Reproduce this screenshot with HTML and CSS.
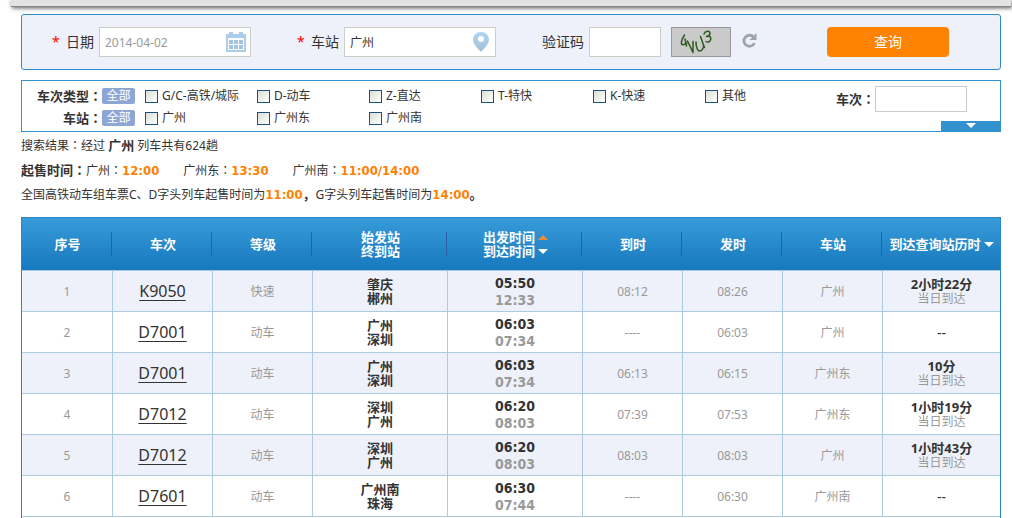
FILE: index.html
```html
<!DOCTYPE html>
<html lang="zh-CN">
<head>
<meta charset="utf-8">
<title>车站车次查询</title>
<link rel="stylesheet" href="styles.css">
</head>
<body>
<div class="topbar"></div>
<main class="page">
  <form class="search">
    <div class="field">
      <span class="required">*</span>
      <label for="date">日期</label>
      <div class="control">
        <input class="text muted" id="date" type="text" value="2014-04-02">
        <svg class="control-icon" width="20" height="20" viewBox="0 0 20 20">
          <path fill="#abcde9" d="M0 2h3V0h4v2h6V0h4v2h3v18H0z"/>
          <path fill="#fff" d="M2 6h16v12H2z"/>
          <path fill="#a5c3df" d="M3 8h4v4H3zM8 8h4v4H8zM13 8h4v4h-4zM3 13h4v4H3zM8 13h4v4H8zM13 13h4v4h-4z"/>
        </svg>
      </div>
    </div>
    <div class="field">
      <span class="required">*</span>
      <label for="station">车站</label>
      <div class="control">
        <input class="text" id="station" type="text" value="广州">
        <svg class="control-icon pin" width="16" height="20" viewBox="0 0 16 20">
          <defs><linearGradient id="pin-fill" x2="0" y2="1"><stop stop-color="#b0d4f0"/><stop offset="1" stop-color="#a3c0dc"/></linearGradient></defs>
          <path fill="url(#pin-fill)" fill-rule="evenodd" d="M8 0C3.400 0 0 3.400 0 7.800 0 12 5 17 8 20c3-3 8-8 8-12.200C16 3.400 12.600 0 8 0zm0 4a3 3 0 1 1 0 6 3 3 0 0 1 0-6z"/>
        </svg>
      </div>
    </div>
    <div class="field">
      <label for="code">验证码</label>
      <input class="text code" id="code" type="text">
      <svg class="captcha" width="60" height="30" viewBox="0 0 60 30" role="img" aria-label="验证码图片">
        <rect x=".5" y=".5" width="59" height="29" fill="#cacaca" stroke="#999"/>
        <g fill="none" stroke="#2d5a1d" stroke-width="1.500" stroke-linecap="round" stroke-linejoin="round">
          <path d="M13.500 8c-2 3-3.500 6-3 9 1 2 3 0 5.500-1M14 12l1.500 7"/>
          <path d="M16.500 14l5.500 11.500v-11"/>
          <path d="M25 15c0 3 1 9 3.500 9s4.500-3 4-6l-3-8.500M32.500 18l1 2.500"/>
          <path d="M33 7c1-3 6-4 6-.5 0 2-1.500 2.500-3.500 3 4-1 5 1 4 3.500s-3 2.500-4.500 1.500"/>
        </g>
      </svg>
      <button class="refresh" type="button" aria-label="刷新验证码">
        <svg width="15" height="15" viewBox="0 0 15 15">
          <path fill="none" stroke="#9fa5af" stroke-width="2.800" d="M11.500 4A5.500 5.500 0 1 0 12.500 10"/>
          <path fill="#9fa5af" d="M14.500 0v7H7.500z"/>
        </svg>
      </button>
    </div>
    <button class="submit" type="submit">查询</button>
  </form>

  <section class="filters">
    <div class="filter-rows">
      <div class="filter-row">
        <b class="filter-name">车次类型<i class="colon">：</i></b>
        <button class="all" type="button">全部</button>
        <label class="option"><input type="checkbox">G/C-高铁/城际</label>
        <label class="option"><input type="checkbox">D-动车</label>
        <label class="option"><input type="checkbox">Z-直达</label>
        <label class="option"><input type="checkbox">T-特快</label>
        <label class="option"><input type="checkbox">K-快速</label>
        <label class="option"><input type="checkbox">其他</label>
      </div>
      <div class="filter-row">
        <b class="filter-name">车站<i class="colon">：</i></b>
        <button class="all" type="button">全部</button>
        <label class="option"><input type="checkbox">广州</label>
        <label class="option"><input type="checkbox">广州东</label>
        <label class="option"><input type="checkbox">广州南</label>
      </div>
    </div>
    <div class="train">
      <label for="train">车次<i class="colon">：</i></label>
      <input id="train" type="text">
    </div>
    <button class="toggle" type="button" aria-label="展开"><span class="arrow down"></span></button>
  </section>

  <section class="summary">
    <p>搜索结果<i class="colon">：</i>经过 <b>广州</b> 列车共有624趟</p>
    <p class="sale"><span><b>起售时间<i class="colon">：</i></b>广州<i class="colon">：</i><strong>12:00</strong></span><span>广州东<i class="colon">：</i><strong>13:30</strong></span><span>广州南<i class="colon">：</i><strong>11:00/14:00</strong></span></p>
    <p>全国高铁动车组车票C、D字头列车起售时间为<strong>11:00</strong><b>，</b>G字头列车起售时间为<strong>14:00</strong><b>。</b></p>
  </section>

  <div class="results">
    <table>
      <colgroup><col class="c-index"><col class="c-std"><col class="c-std"><col class="c-wide"><col class="c-wide"><col class="c-std"><col class="c-std"><col class="c-std"><col class="c-last"></colgroup>
      <thead>
        <tr>
          <th>序号</th><th>车次</th><th>等级</th><th>始发站<br>终到站</th>
          <th><button class="sort" type="button">出发时间<span class="arrow up"></span></button><button class="sort" type="button">到达时间<span class="arrow down"></span></button></th>
          <th>到时</th><th>发时</th><th>车站</th>
          <th><button class="sort" type="button">到达查询站历时<span class="arrow down"></span></button></th>
        </tr>
      </thead>
      <tbody>
        <tr><td>1</td><td><a href="#">K9050</a></td><td>快速</td><td class="route">肇庆<br>郴州</td><td class="times">05:50<br><span>12:33</span></td><td>08:12</td><td>08:26</td><td>广州</td><td class="span"><b>2小时22分</b><br>当日到达</td></tr>
        <tr><td>2</td><td><a href="#">D7001</a></td><td>动车</td><td class="route">广州<br>深圳</td><td class="times">06:03<br><span>07:34</span></td><td>----</td><td>06:03</td><td>广州</td><td class="none">--</td></tr>
        <tr><td>3</td><td><a href="#">D7001</a></td><td>动车</td><td class="route">广州<br>深圳</td><td class="times">06:03<br><span>07:34</span></td><td>06:13</td><td>06:15</td><td>广州东</td><td class="span"><b>10分</b><br>当日到达</td></tr>
        <tr><td>4</td><td><a href="#">D7012</a></td><td>动车</td><td class="route">深圳<br>广州</td><td class="times">06:20<br><span>08:03</span></td><td>07:39</td><td>07:53</td><td>广州东</td><td class="span"><b>1小时19分</b><br>当日到达</td></tr>
        <tr><td>5</td><td><a href="#">D7012</a></td><td>动车</td><td class="route">深圳<br>广州</td><td class="times">06:20<br><span>08:03</span></td><td>08:03</td><td>08:03</td><td>广州</td><td class="span"><b>1小时43分</b><br>当日到达</td></tr>
        <tr><td>6</td><td><a href="#">D7601</a></td><td>动车</td><td class="route">广州南<br>珠海</td><td class="times">06:30<br><span>07:44</span></td><td>----</td><td>06:30</td><td>广州南</td><td class="none">--</td></tr>
      </tbody>
    </table>
  </div>
</main>
</body>
</html>
```
FILE: styles.css
```css
* { box-sizing: border-box; }

body {
  margin: 0;
  min-height: 100vh;
  display: flex;
  flex-direction: column;
  background: #fff;
  color: #333;
  font: 12px/14px "Noto Sans", "Noto Sans CJK SC", sans-serif;
}

input, button { font: inherit; color: inherit; }
button { border: 0; padding: 0; background: none; cursor: pointer; }

.topbar {
  height: 7px;
  margin: 0 1px 0 11px;
  background: #e3e3e3;
  border-bottom: 1px solid #858585;
  box-shadow: 1px 1px 4px #555;
}

.page {
  flex: 1;
  display: flex;
  flex-direction: column;
  padding: 7px 11px 0 21px;
}

/* Centred full-width colon */
.colon {
  font-family: "Noto Sans CJK TC", sans-serif;
  font-style: normal;
  -webkit-locale: "zh-TW";
}

/* Search form */
.search {
  display: flex;
  align-items: center;
  gap: 46px;
  height: 56px;
  padding-left: 30px;
  background: #eef1f9;
  border: 1px solid #2f8bcb;
  border-radius: 3px;
}
.field { display: flex; align-items: center; font-size: 14px; }
.field label { margin-right: 5px; white-space: nowrap; }
.required { width: 14px; color: #f00; }
.control { display: flex; position: relative; }
.text {
  width: 152px;
  height: 30px;
  padding: 0 5px;
  background: #fff;
  border: 1px solid #cfcdc7;
  font-size: 12px;
}
.text.muted { color: #999; }
.text.code { width: 72px; }
.control-icon { position: absolute; right: 5px; top: 5px; }
.control-icon.pin { right: 7px; }
.captcha { margin: 0 11px 0 10px; }
.refresh { display: flex; width: 15px; height: 15px; margin-bottom: 4px; }
.submit {
  width: 122px;
  height: 30px;
  margin-left: 24px;
  background: #ff8201;
  border-radius: 4px;
  color: #fff;
  font-size: 14px;
}

/* Filters */
.filters {
  display: flex;
  justify-content: space-between;
  position: relative;
  height: 52px;
  margin-top: 10px;
  padding: 4px 33px 0 0;
  border: 1px solid #3391cf;
}
.filter-row { display: flex; align-items: center; height: 22px; }
.filter-name { width: 80px; text-align: right; font-size: 13px; }
.all {
  width: 33px;
  height: 16px;
  margin-right: 10px;
  background: #8ea6d6;
  border-radius: 2px;
  color: #fff;
}
.option { display: flex; align-items: center; gap: 4px; width: 112px; white-space: nowrap; }
.option input {
  appearance: none;
  width: 13px;
  height: 13px;
  margin: 0;
  border: 1px solid #1d5180;
  background: linear-gradient(135deg, #dcdcd7, #fff);
}
.train { display: flex; align-items: center; height: 28px; }
.train label { font-size: 13px; font-weight: bold; }
.train input { width: 92px; height: 26px; border: 1px solid #ccc; }
.toggle {
  position: absolute;
  right: 0;
  bottom: 0;
  display: flex;
  justify-content: center;
  align-items: flex-start;
  width: 59px;
  height: 10px;
  padding-top: 2px;
  background: #3391cf;
}

.arrow { border: 5px solid transparent; }
.arrow.down { border-top-color: #fff; border-bottom: 0; }
.arrow.up { border-bottom-color: #f58a33; border-top: 0; }

/* Summary */
.summary { padding-bottom: 10px; line-height: 25px; }
.summary p { margin: 0; height: 25px; }
.summary b { font-size: 13px; }
.summary strong { color: #ff7f00; font: bold 13px/25px "DejaVu Sans Condensed", sans-serif; }
.sale { display: flex; gap: 24px; }

/* Results */
.results {
  flex: 1;
  border: 1px solid #2a86c6;
  border-bottom: 0;
}
table { width: 100%; table-layout: fixed; border-collapse: separate; border-spacing: 0; text-align: center; }
.c-index { width: 91px; }
.c-std { width: 100px; }
.c-wide { width: 135px; }
.c-last { width: 117px; }
thead { background: linear-gradient(#379bd9, #1778be); }
th {
  height: 53px;
  padding: 0;
  border-bottom: 1px solid #a8cbe0;
  background: linear-gradient(#2a5fa8, #2a5fa8) right 1px center / 1px 24px no-repeat;
  color: #fff;
  font-size: 13px;
}
th:last-child { background: none; }
.sort { display: flex; align-items: center; justify-content: center; gap: 3px; width: 100%; white-space: nowrap; }
td {
  height: 41px;
  padding: 2px 0 0;
  border-right: 1px solid #abcbde;
  border-bottom: 1px solid #abcbde;
  color: #999;
}
td:last-child { border-right: 0; }
tbody tr:nth-child(odd) { background: #eef1f9; }
td a { color: #333; font-size: 16px; text-underline-offset: 3px; }
.route, .span { padding-top: 0; }
.route { color: #333; font-size: 13px; font-weight: bold; }
.times { color: #333; font: bold 14px/17px "DejaVu Sans Condensed", sans-serif; }
.times span { color: #999; }
.span b { color: #333; font-size: 13px; }
.none { color: #333; font-size: 14px; }
```
